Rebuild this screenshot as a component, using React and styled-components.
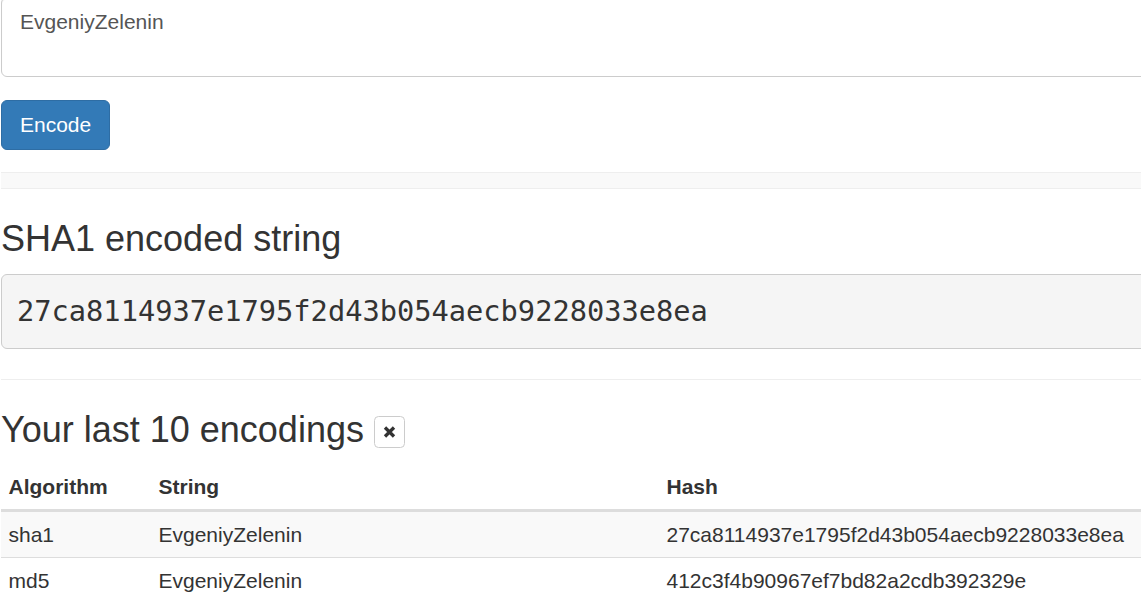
import React from "react";
import styled, { createGlobalStyle } from "styled-components";

const GlobalStyle = createGlobalStyle`
  * {
    box-sizing: border-box;
  }
  html, body {
    margin: 0;
    background: #fff;
    overflow: hidden;
  }
  body {
    font-family: "Liberation Sans", Arial, sans-serif;
    font-size: 21px;
    line-height: 1.42857;
    color: #333;
  }
`;

const Viewport = styled.div`
  width: 100vw;
  overflow: hidden;
`;

const Page = styled.div`
  width: 1240px;
  margin-left: 1px;
  margin-top: -3px;
`;

const FormGroup = styled.div`
  margin-bottom: 22.5px;
`;

const TextArea = styled.textarea`
  display: block;
  width: 100%;
  height: 80px;
  padding: 9px 18px;
  font-family: inherit;
  font-size: 21px;
  line-height: 30px;
  color: #555;
  background: #fff;
  border: 1px solid #ccc;
  border-radius: 6px;
  box-shadow: inset 0 1px 1px rgba(0, 0, 0, 0.075);
  resize: none;
  outline: none;
`;

const PrimaryButton = styled.button`
  display: inline-block;
  padding: 9px 18px;
  font-family: inherit;
  font-size: 21px;
  line-height: 30px;
  color: #fff;
  background: #337ab7;
  border: 1px solid #2e6da4;
  border-radius: 6px;
  cursor: pointer;
`;

const Band = styled.div`
  height: 17px;
  background: #f9f9f9;
  border-top: 1px solid #eee;
  border-bottom: 1px solid #eee;
`;

const Heading = styled.h3`
  font-size: 36px;
  font-weight: 500;
  line-height: 1.1;
  margin: 30px 0 15px;
  color: #333;
`;

const Code = styled.pre`
  margin: 0 0 15px;
  padding: 14px 15px;
  font-family: "DejaVu Sans Mono", monospace;
  font-size: 28.7px;
  line-height: 45px;
  color: #333;
  background: #f5f5f5;
  border: 1px solid #ccc;
  border-radius: 6px;
  white-space: pre;
`;

const Rule = styled.hr`
  margin: 30px 0;
  border: 0;
  border-top: 1px solid #eee;
`;

const SmallButton = styled.button`
  display: inline-flex;
  align-items: center;
  justify-content: center;
  vertical-align: middle;
  width: 31px;
  height: 32px;
  padding: 0;
  background: #fff;
  border: 1px solid #ccc;
  border-radius: 4.5px;
  cursor: pointer;
`;

const Table = styled.table`
  width: 100%;
  border-collapse: collapse;
  border-spacing: 0;
`;

const Th = styled.th`
  width: ${(p) => (p.$w ? `${p.$w}px` : "auto")};
  padding: 7.5px;
  text-align: left;
  font-weight: bold;
  line-height: 30px;
  border-bottom: 3px solid #ddd;
`;

const Row = styled.tr`
  background: ${(p) => (p.$striped ? "#f9f9f9" : "#fff")};
`;

const Td = styled.td`
  padding: 7.5px;
  line-height: 30px;
  border-top: 1px solid #ddd;
`;

function RemoveIcon() {
  return (
    <svg width="13" height="12" viewBox="0 0 13 12">
      <path
        d="M2 1.5 L11 10.5 M11 1.5 L2 10.5"
        stroke="#333"
        strokeWidth="3.3"
        strokeLinecap="butt"
      />
    </svg>
  );
}

const history = [
  { algo: "sha1", str: "EvgeniyZelenin", hash: "27ca8114937e1795f2d43b054aecb9228033e8ea" },
  { algo: "md5", str: "EvgeniyZelenin", hash: "412c3f4b90967ef7bd82a2cdb392329e" },
];

export default function App() {
  return (
    <Viewport>
      <GlobalStyle />
      <Page>
        <FormGroup>
          <TextArea defaultValue="EvgeniyZelenin" />
        </FormGroup>
        <FormGroup>
          <PrimaryButton>Encode</PrimaryButton>
        </FormGroup>
        <Band />

        <Heading>SHA1 encoded string</Heading>
        <Code>27ca8114937e1795f2d43b054aecb9228033e8ea</Code>

        <Rule />

        <Heading>
          Your last 10 encodings{" "}
          <SmallButton aria-label="Clear history">
            <RemoveIcon />
          </SmallButton>
        </Heading>
        <Table>
          <thead>
            <tr>
              <Th $w={150}>Algorithm</Th>
              <Th $w={508}>String</Th>
              <Th>Hash</Th>
            </tr>
          </thead>
          <tbody>
            {history.map((h, i) => (
              <Row key={i} $striped={i % 2 === 0}>
                <Td>{h.algo}</Td>
                <Td>{h.str}</Td>
                <Td>{h.hash}</Td>
              </Row>
            ))}
          </tbody>
        </Table>
      </Page>
    </Viewport>
  );
}
